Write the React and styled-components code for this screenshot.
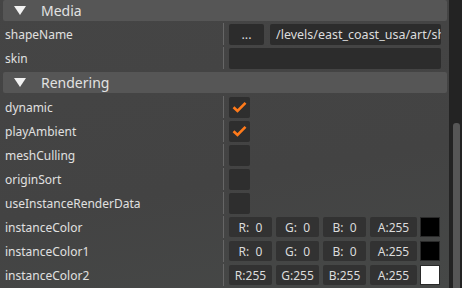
import React from "react";
import styled, { createGlobalStyle } from "styled-components";

const Global = createGlobalStyle`
  html, body {
    margin: 0;
    padding: 0;
    background: #444444;
  }
  body {
    font-family: "Noto Sans", "Open Sans", sans-serif;
  }
`;

const Window = styled.div`
  width: 462px;
  height: 288px;
  overflow: hidden;
  display: flex;
  background: #444444;
`;

const Content = styled.div`
  flex: 1;
  min-width: 0;
  display: flex;
  flex-direction: column;
  background: linear-gradient(170deg, #454545 0%, #434343 60%, #464847 100%);
`;

const SectionHeader = styled.div`
  height: 21px;
  margin: ${(p) => (p.$first ? "0 2px 1px 3px" : "2px 2px 2px 3px")};
  background: #565656;
  border-radius: 2px;
  display: flex;
  align-items: center;
  color: #e2e2e2;
  font-size: 14px;
`;

const Arrow = styled.span`
  width: 0;
  height: 0;
  margin: 0 15px 0 11px;
  border-left: 6px solid transparent;
  border-right: 6px solid transparent;
  border-top: 9px solid #f2f2f2;
`;

const Row = styled.div`
  height: 24px;
  display: flex;
  align-items: center;
`;

const Label = styled.div`
  width: 218px;
  padding-left: 5px;
  color: #e0e0e0;
  font-size: 12px;
  white-space: nowrap;
`;

const Divider = styled.div`
  width: 1px;
  align-self: stretch;
  margin: 1px 0;
  background: #666666;
`;

const Value = styled.div`
  flex: 1;
  min-width: 0;
  display: flex;
  align-items: center;
  gap: ${(p) => p.$gap || 4}px;
  padding: 0 8px 0 5px;
`;

const Field = styled.div`
  height: 21px;
  width: ${(p) => (p.$w ? p.$w + "px" : "auto")};
  flex: ${(p) => (p.$w ? "none" : 1)};
  min-width: 0;
  background: #2c2c2c;
  border-radius: 2px;
  color: #dcdcdc;
  font-size: 12.5px;
  display: flex;
  align-items: center;
  justify-content: ${(p) => (p.$center ? "center" : "flex-start")};
  padding-left: ${(p) => (p.$center ? 0 : 6)}px;
  overflow: hidden;
  white-space: nowrap;
`;

const Check = styled.div`
  width: 21px;
  height: 21px;
  background: #2e2e2e;
  border-radius: 2px;
  display: flex;
  align-items: center;
  justify-content: center;
`;

const ColorBox = styled.div`
  width: ${(p) => p.$w}px;
  height: 20px;
  background: #323232;
  border-radius: 2px;
  color: #dcdcdc;
  font-size: 12px;
  display: flex;
  align-items: center;
  justify-content: center;
  white-space: pre;
`;

const Swatch = styled.div`
  width: 18px;
  height: 18px;
  margin-left: -1px;
  border: 1px solid #2a2a2a;
  background: ${(p) => p.$c};
`;

const ScrollTrack = styled.div`
  width: 13px;
  flex: none;
  background: #232323;
  display: flex;
  flex-direction: column;
  padding-top: 123px;
  align-items: center;
`;

const Thumb = styled.div`
  width: 7px;
  margin-left: 1px;
  flex: 1;
  background: #565656;
  border-radius: 3px 3px 0 0;
`;

const Tick = () => (
  <svg width="15" height="12" viewBox="0 0 15 12">
    <path d="M1.5 6.2 L5.5 10 L13.5 1.8" fill="none" stroke="#ff7a1a" strokeWidth="2.6" />
  </svg>
);

const ColorRow = ({ label, v, c }) => (
  <Row>
    <Label>{label}</Label>
    <Divider />
    <Value $gap={4}>
      <ColorBox $w={43}>{"R:" + v}</ColorBox>
      <ColorBox $w={43}>{"G:" + v}</ColorBox>
      <ColorBox $w={43}>{"B:" + v}</ColorBox>
      <ColorBox $w={47}>A:255</ColorBox>
      <Swatch $c={c} />
    </Value>
  </Row>
);

const CheckRow = ({ label, on }) => (
  <Row>
    <Label>{label}</Label>
    <Divider />
    <Value>
      <Check>{on && <Tick />}</Check>
    </Value>
  </Row>
);

export default function App() {
  return (
    <Window>
      <Global />
      <Content>
        <SectionHeader $first>
          <Arrow />
          Media
        </SectionHeader>
        <Row>
          <Label>shapeName</Label>
          <Divider />
          <Value $gap={6}>
            <Field $w={35} $center>...</Field>
            <Field>/levels/east_coast_usa/art/shapes/</Field>
          </Value>
        </Row>
        <Row>
          <Label>skin</Label>
          <Divider />
          <Value>
            <Field />
          </Value>
        </Row>
        <SectionHeader>
          <Arrow />
          Rendering
        </SectionHeader>
        <CheckRow label="dynamic" on />
        <CheckRow label="playAmbient" on />
        <CheckRow label="meshCulling" />
        <CheckRow label="originSort" />
        <CheckRow label="useInstanceRenderData" />
        <ColorRow label="instanceColor" v="  0" c="#000000" />
        <ColorRow label="instanceColor1" v="  0" c="#000000" />
        <ColorRow label="instanceColor2" v="255" c="#ffffff" />
      </Content>
      <ScrollTrack>
        <Thumb />
      </ScrollTrack>
    </Window>
  );
}
